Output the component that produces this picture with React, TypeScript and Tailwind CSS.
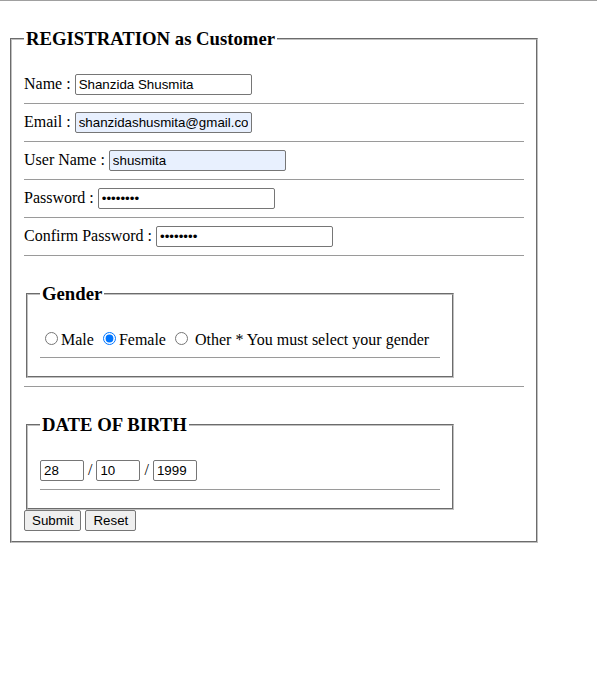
import React from "react";

const inputCls =
  "h-[21px] border border-[#767676] rounded-[2px] px-[3px] py-[2px] text-[13.33px] text-black font-['Liberation_Sans',Arial,sans-serif] outline-none";

const btnCls =
  "h-[21px] px-[7px] bg-[#efefef] border border-[#767676] rounded-[2px] text-[13.33px] leading-[normal] font-['Liberation_Sans',Arial,sans-serif]";

const Row = (props: { label: string; children: React.ReactNode }) => {
  return (
    <div className="flex items-baseline h-[21px]">
      <span>{props.label + "\u00a0"}</span>
      {props.children}
    </div>
  );
};

const Line = (props: { className?: string }) => (
  <hr className={"my-2 border-t border-[#9a9a9a] " + (props.className ?? "")} />
);

export default function App() {
  return (
    <div className="min-h-screen bg-white text-black text-[16px] leading-[normal] font-['Liberation_Serif','Times_New_Roman',serif]">
      <div className="h-px bg-[#a0a0a0]" />
      <form className="pl-[10px] pt-[27px]" onSubmit={(e) => e.preventDefault()}>
        <fieldset className="w-[528px] [border:2px_groove_#c0c0c0] px-3 pb-[10px]">
          <legend className="px-[2px] text-[18.72px] font-bold leading-[22px]">
            REGISTRATION as Customer
          </legend>

          <div className="mt-[24px]">
            <Row label="Name :">
              <input className={inputCls + " w-[177px] bg-white"} defaultValue="Shanzida Shusmita" />
            </Row>
          </div>
          <Line />
          <Row label="Email :">
            <input
              className={inputCls + " w-[177px] bg-[#e8f0fe]"}
              defaultValue="shanzidashusmita@gmail.com"
            />
          </Row>
          <Line />
          <Row label="User Name :">
            <input className={inputCls + " w-[177px] bg-[#e8f0fe]"} defaultValue="shusmita" />
          </Row>
          <Line />
          <Row label="Password :">
            <input type="password" className={inputCls + " w-[177px] bg-white"} defaultValue="shusmita" />
          </Row>
          <Line />
          <Row label="Confirm Password :">
            <input type="password" className={inputCls + " w-[177px] bg-white"} defaultValue="shusmita" />
          </Row>
          <Line />

          {/* hr margin collapses into this one */}
          <fieldset className="mt-[27px] ml-[2px] w-[428px] [border:2px_groove_#c0c0c0] px-3 pb-[10px]">
            <legend className="px-[2px] text-[18.72px] font-bold leading-[22px]">Gender</legend>
            <div className="mt-[24px]">
              <input type="radio" name="gender" className="ml-[5px] mr-[3px] mt-[3px]" />
              Male{" "}
              <input type="radio" name="gender" className="ml-[5px] mr-[3px] mt-[3px]" defaultChecked />
              Female{" "}
              <input type="radio" name="gender" className="ml-[5px] mr-[3px] mt-[3px]" />{" "}
              Other * You must select your gender
            </div>
            <Line className="mb-0" />
            <div className="h-[8px]" />
          </fieldset>

          <Line />

          <fieldset className="mt-[27px] ml-[2px] w-[428px] [border:2px_groove_#c0c0c0] px-3 pb-[10px]">
            <legend className="px-[2px] text-[18.72px] font-bold leading-[22px]">DATE OF BIRTH</legend>
            <div className="mt-[24px] flex items-baseline h-[21px]">
              <input className={inputCls + " w-[44px] bg-white"} defaultValue="28" />
              <span>{"\u00a0/\u00a0"}</span>
              <input className={inputCls + " w-[44px] bg-white"} defaultValue="10" />
              <span>{"\u00a0/\u00a0"}</span>
              <input className={inputCls + " w-[44px] bg-white"} defaultValue="1999" />
            </div>
            <Line className="mb-0" />
            <div className="h-[8px]" />
          </fieldset>

          <div className="flex gap-[4px]">
            <button type="submit" className={btnCls}>
              Submit
            </button>
            <button type="reset" className={btnCls}>
              Reset
            </button>
          </div>
        </fieldset>
      </form>
    </div>
  );
}
